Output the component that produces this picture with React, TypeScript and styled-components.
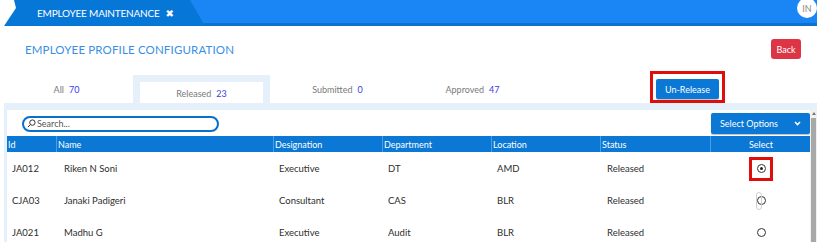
import styled, { createGlobalStyle } from 'styled-components';

const GlobalStyle = createGlobalStyle`
  html, body {
    margin: 0;
    padding: 0;
    background: #fff;
    font-family: Lato, "Open Sans", sans-serif;
    overflow: hidden;
  }
`;

const employees = [
  { id: 'JA012', name: 'Riken N Soni', designation: 'Executive', dept: 'DT', location: 'AMD', status: 'Released', selected: true, marked: true },
  { id: 'CJA03', name: 'Janaki Padigeri', designation: 'Consultant', dept: 'CAS', location: 'BLR', status: 'Released', selected: false, knob: true },
  { id: 'JA021', name: 'Madhu G', designation: 'Executive', dept: 'Audit', location: 'BLR', status: 'Released', selected: false },
];

const columns = [
  { label: 'Id', width: 49 },
  { label: 'Name', width: 217 },
  { label: 'Designation', width: 109 },
  { label: 'Department', width: 109 },
  { label: 'Location', width: 109 },
  { label: 'Status', width: 110 },
  { label: 'Select', width: 100, center: true },
];

const tabs = [
  { name: 'All', count: 70, width: 133 },
  { name: 'Released', count: 23, width: 137, active: true },
  { name: 'Submitted', count: 0, width: 135 },
  { name: 'Approved', count: 47, width: 135 },
];

const Page = styled.div`
  width: 817px;
  height: 242px;
  display: flex;
  flex-direction: column;
`;

const TopBar = styled.header`
  display: flex;
  align-items: flex-start;
  height: 23px;
  background: #1a86f6;
  border-bottom: 3px solid #0a74cc;
`;

const ModuleTab = styled.div`
  position: relative;
  width: 205px;
  height: 26px;
  display: flex;
  align-items: center;
  padding-left: 37px;
  box-sizing: border-box;
  background: #0677d6;
  clip-path: polygon(0 0, 190px 0, 205px 100%, 0 100%);
  color: #fff;
  font-size: 10px;
  letter-spacing: -0.2px;
  gap: 6px;

  &::before {
    content: '';
    position: absolute;
    left: 0;
    top: 0;
    width: 17px;
    height: 100%;
    background: #fff;
    clip-path: polygon(0 0, 14px 0, 16px 8px, 4px 100%, 0 100%);
  }
`;

const CloseMark = styled.span`
  font-size: 10px;
  font-weight: 900;
  font-family: "DejaVu Sans", sans-serif;
`;

const Spacer = styled.div`
  flex: 1;
`;

const Avatar = styled.div`
  width: 20px;
  height: 20px;
  margin-top: -2px;
  border-radius: 50%;
  background: #fff;
  color: #8a8a8a;
  font-size: 9px;
  display: flex;
  align-items: center;
  justify-content: center;
`;

const HeaderRow = styled.div`
  display: flex;
  align-items: center;
  justify-content: space-between;
  padding: 13px 16px 0 25px;
  height: 20px;
`;

const Title = styled.h1`
  margin: 0;
  font-size: 11.5px;
  font-weight: 400;
  color: #3a8fe2;
  letter-spacing: 0.15px;
`;

const BackButton = styled.button`
  width: 30px;
  height: 20px;
  border: none;
  border-radius: 3px;
  background: #dc3545;
  color: #fff;
  font-family: inherit;
  font-size: 9px;
  padding: 0;
`;

const TabsRow = styled.div`
  display: flex;
  align-items: stretch;
  margin-top: 16px;
  height: 28px;
`;

const Tab = styled.div<{ $w: number; $active?: boolean }>`
  width: ${({ $w }) => $w}px;
  box-sizing: border-box;
  padding: ${({ $active }) => ($active ? '7px 7px 0' : '0')};
  background: ${({ $active }) => ($active ? '#e6f0fb' : 'transparent')};
  display: flex;
`;

const TabInner = styled.div<{ $active?: boolean }>`
  flex: 1;
  display: flex;
  align-items: center;
  justify-content: center;
  gap: 5px;
  background: #fff;
  font-size: 9px;
  color: #7a7a7a;
  padding-top: ${({ $active }) => ($active ? '1px' : '0')};
`;

const Count = styled.span`
  color: #3b3be8;
`;

const Highlight = styled.div`
  border: 3px solid #e00d0d;
  padding: 5px 3px 1px;
  margin-left: 110px;
  margin-top: -4px;
  height: fit-content;
`;

const PrimaryButton = styled.button<{ $wide?: boolean }>`
  display: flex;
  align-items: center;
  justify-content: center;
  gap: 16px;
  width: ${({ $wide }) => ($wide ? '99px' : 'auto')};
  height: ${({ $wide }) => ($wide ? '21px' : '20px')};
  border: none;
  border-radius: 2px;
  background: #0a78d4;
  color: #fff;
  font-family: inherit;
  font-size: 9px;
  padding: 0 9px;
  box-shadow: 0 1px 1px rgba(0, 0, 0, 0.25);
`;

const Content = styled.div`
  flex: 1;
  margin-left: 4px;
  background: #e6f0fb;
  padding: 7px 0 0 3px;
  display: flex;
  min-height: 0;
`;

const Panel = styled.div`
  flex: 1;
  background: #fff;
  display: flex;
  flex-direction: column;
  overflow: hidden;
`;

const Toolbar = styled.div`
  display: flex;
  align-items: center;
  justify-content: space-between;
  padding: 3px 0 0 15px;
  height: 21px;
`;

const SearchBox = styled.div`
  width: 197px;
  height: 16px;
  box-sizing: border-box;
  border: 2px solid #0a6fc6;
  border-radius: 8px;
  display: flex;
  align-items: center;
  gap: 1px;
  padding-left: 3px;
  font-size: 9px;
  color: #555;
`;

const Table = styled.div`
  margin-top: 2px;
  width: 803px;
`;

const HeadRow = styled.div`
  display: flex;
  height: 16px;
  background: #0a78d4;
`;

const HeadCell = styled.div<{ $w: number; $center?: boolean }>`
  width: ${({ $w }) => $w}px;
  box-sizing: border-box;
  padding-left: 1px;
  display: flex;
  align-items: center;
  justify-content: ${({ $center }) => ($center ? 'center' : 'flex-start')};
  color: #fff;
  font-size: 9px;
  border-left: 1px solid #4a9ee4;
  &:first-child {
    border-left: none;
  }
`;

const BodyRow = styled.div`
  display: flex;
  height: 31px;
  padding-top: 1px;
`;

const BodyCell = styled.div<{ $w: number; $pad?: number; $center?: boolean }>`
  width: ${({ $w }) => $w}px;
  box-sizing: border-box;
  padding-left: ${({ $pad }) => $pad ?? 6}px;
  display: flex;
  align-items: center;
  justify-content: ${({ $center }) => ($center ? 'center' : 'flex-start')};
  color: #2d2d2d;
  font-size: 9.5px;
`;

const Marked = styled.div<{ $on?: boolean }>`
  position: relative;
  display: flex;
  align-items: center;
  justify-content: center;
  width: 18px;
  height: 18px;
  margin-left: 2px;
  outline: ${({ $on }) => ($on ? '3px solid #e00d0d' : 'none')};
`;

const Radio = styled.span<{ $checked?: boolean }>`
  width: 7px;
  height: 7px;
  border-radius: 50%;
  border: 1px solid #333;
  display: flex;
  align-items: center;
  justify-content: center;
  background: #fff;
  &::after {
    content: '';
    width: 3px;
    height: 3px;
    border-radius: 50%;
    background: ${({ $checked }) => ($checked ? '#222' : 'transparent')};
  }
`;

const Knob = styled.span`
  position: absolute;
  left: 4px;
  top: 0;
  width: 4px;
  height: 16px;
  border: 1px solid #cfcfcf;
  border-radius: 3px;
`;

const ScrollTrack = styled.div`
  width: 7px;
  display: flex;
  flex-direction: column;
  align-items: center;
  background: #f1f1f1;
  padding-top: 2px;
`;

const ScrollArrow = styled.span`
  width: 0;
  height: 0;
  border-left: 2.5px solid transparent;
  border-right: 2.5px solid transparent;
  border-bottom: 3px solid #777;
`;

const ScrollThumb = styled.div`
  margin-top: 3px;
  width: 5px;
  flex: 1;
  background: #a8a8a8;
`;

function SearchIcon() {
  return (
    <svg width='9' height='9' viewBox='0 0 10 10' fill='none' stroke='#333' strokeWidth='1.1'>
      <circle cx='6' cy='4' r='3' />
      <line x1='3.8' y1='6.2' x2='1' y2='9' />
    </svg>
  );
}

function ChevronDown() {
  return (
    <svg width='7' height='5' viewBox='0 0 7 5' fill='none' stroke='#fff' strokeWidth='1.6'>
      <polyline points='1,1 3.5,3.5 6,1' />
    </svg>
  );
}

export default function App() {
  return (
    <Page>
      <GlobalStyle />
      <TopBar>
        <ModuleTab>
          EMPLOYEE MAINTENANCE <CloseMark>✖</CloseMark>
        </ModuleTab>
        <Spacer />
        <Avatar>IN</Avatar>
      </TopBar>

      <HeaderRow>
        <Title>EMPLOYEE PROFILE CONFIGURATION</Title>
        <BackButton>Back</BackButton>
      </HeaderRow>

      <TabsRow>
        {tabs.map((t) => (
          <Tab key={t.name} $w={t.width} $active={t.active}>
            <TabInner $active={t.active}>
              {t.name} <Count>{t.count}</Count>
            </TabInner>
          </Tab>
        ))}
        <Highlight>
          <PrimaryButton>Un-Release</PrimaryButton>
        </Highlight>
      </TabsRow>

      <Content>
        <Panel>
          <Toolbar>
            <SearchBox>
              <SearchIcon />
              Search...
            </SearchBox>
            <PrimaryButton $wide>
              Select Options <ChevronDown />
            </PrimaryButton>
          </Toolbar>
          <Table>
            <HeadRow>
              {columns.map((c) => (
                <HeadCell key={c.label} $w={c.width} $center={c.center}>
                  {c.label}
                </HeadCell>
              ))}
            </HeadRow>
            {employees.map((e) => (
              <BodyRow key={e.id}>
                <BodyCell $w={49} $pad={5}>{e.id}</BodyCell>
                <BodyCell $w={217} $pad={8}>{e.name}</BodyCell>
                <BodyCell $w={109}>{e.designation}</BodyCell>
                <BodyCell $w={109}>{e.dept}</BodyCell>
                <BodyCell $w={109}>{e.location}</BodyCell>
                <BodyCell $w={110} $pad={7}>{e.status}</BodyCell>
                <BodyCell $w={100} $pad={0} $center>
                  <Marked $on={e.marked}>
                    {e.knob && <Knob />}
                    <Radio $checked={e.selected} />
                  </Marked>
                </BodyCell>
              </BodyRow>
            ))}
          </Table>
        </Panel>
        <ScrollTrack>
          <ScrollArrow />
          <ScrollThumb />
        </ScrollTrack>
      </Content>
    </Page>
  );
}
